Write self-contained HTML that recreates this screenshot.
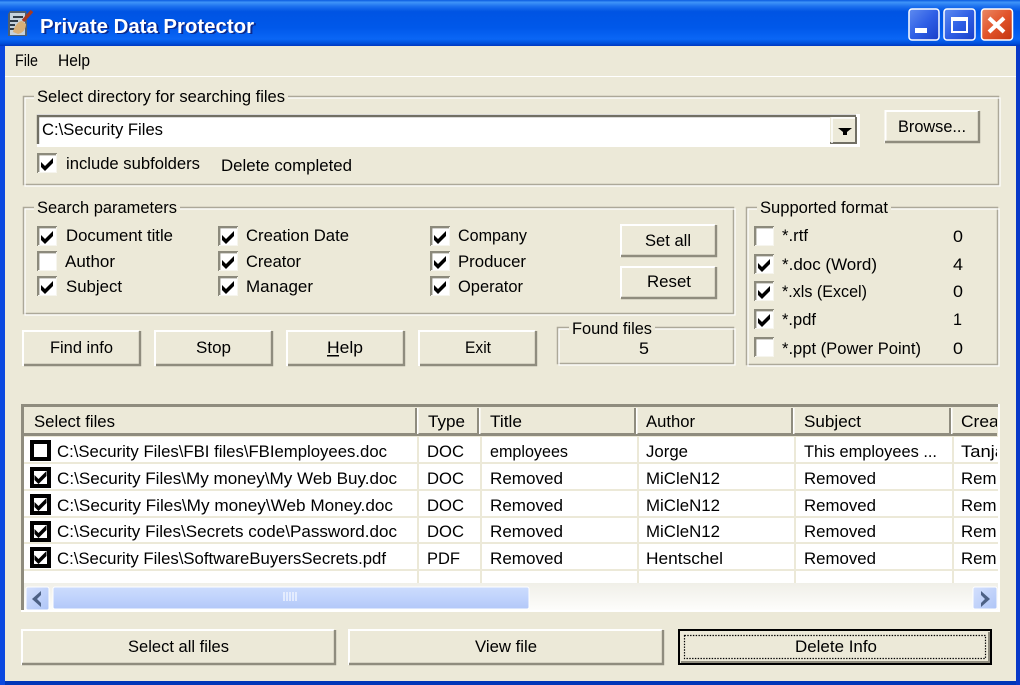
<!DOCTYPE html>
<html><head><meta charset="utf-8"><style>
html,body{margin:0;padding:0;background:#ece9d8;width:1020px;height:685px;overflow:hidden}
svg{display:block;position:absolute;left:0;top:0}
text{font-family:"Liberation Sans",sans-serif;font-size:17px;fill:#000}
</style></head><body>
<svg width="1020" height="685" viewBox="0 0 1020 685" xmlns="http://www.w3.org/2000/svg">
<defs>
<linearGradient id="tb" x1="0" y1="0" x2="0" y2="1">
<stop offset="0" stop-color="#0a5ae0"/><stop offset=".05" stop-color="#3f94f8"/><stop offset=".14" stop-color="#1c70ee"/><stop offset=".25" stop-color="#0054e3"/><stop offset=".6" stop-color="#0058ea"/><stop offset=".85" stop-color="#0a66f5"/><stop offset=".94" stop-color="#0050dc"/><stop offset="1" stop-color="#0038c0"/>
</linearGradient>
<linearGradient id="bb" x1="0" y1="0" x2="1" y2="1"><stop offset="0" stop-color="#5f8cf0"/><stop offset=".5" stop-color="#2f5fe6"/><stop offset="1" stop-color="#1a3fc8"/></linearGradient>
<linearGradient id="rb" x1="0" y1="0" x2="1" y2="1"><stop offset="0" stop-color="#ea8a66"/><stop offset=".5" stop-color="#e2532a"/><stop offset="1" stop-color="#c23410"/></linearGradient>
<linearGradient id="th" x1="0" y1="0" x2="0" y2="1"><stop offset="0" stop-color="#ccdcfd"/><stop offset=".5" stop-color="#c0d3fc"/><stop offset="1" stop-color="#b2c8f8"/></linearGradient>
<linearGradient id="tr" x1="0" y1="0" x2="0" y2="1"><stop offset="0" stop-color="#f0efe8"/><stop offset="1" stop-color="#fdfdfb"/></linearGradient>
<linearGradient id="ab" x1="0" y1="0" x2="1" y2="1"><stop offset="0" stop-color="#d4e0fd"/><stop offset="1" stop-color="#aec5f7"/></linearGradient>
<clipPath id="c5"><rect x="952" y="408" width="45" height="175"/></clipPath>
<g id="cb"><rect width="20" height="20" fill="#fff"/><path d="M1.200 20V1.200H20" fill="none" stroke="#8c8a7c" stroke-width="2.400"/><path d="M1 19.500H19.500V1" fill="none" stroke="#f6f5ee" stroke-width="1"/></g>
<path id="ck" d="M0 5l4 4 8-8v5l-8 8-4-4z" fill="#000"/>
<g id="lc"><rect x="2" y="2" width="17" height="17" fill="#fff" stroke="#000" stroke-width="4"/></g>
</defs>

<!-- window frame -->
<rect width="1020" height="685" fill="#0831d9"/>
<rect x="0" y="681" width="1020" height="4" fill="#0036b8"/>
<rect x="1016" y="46" width="4" height="639" fill="#0838c8"/>
<rect x="0" y="46" width="5" height="639" fill="#0a48e0"/>
<rect x="5" y="46" width="1011" height="635" fill="#ece9d8"/>
<rect x="0" y="0" width="1020" height="46" fill="url(#tb)"/>

<!-- title icon -->
<path d="M10 11h16l1 3v22H8V14z" fill="#4e5f70"/>
<rect x="10" y="13" width="15" height="22" fill="#c5d2dc"/>
<path d="M13 17h10M10 21h8M10 25h5M10 29h5" stroke="#2f3c48" stroke-width="2"/>
<path d="M23 21l9-10" stroke="#a83a20" stroke-width="3.400"/>
<path d="M13 32c1-5 5-11 9-11l4 3c0 5-3 9-8 10z" fill="#d8b078"/>

<!-- title -->
<text x="42" y="34" font-weight="700" style="font-size:20px;fill:#0a2a90" textLength="214" lengthAdjust="spacingAndGlyphs">Private Data Protector</text>
<text x="40" y="33" font-weight="700" style="font-size:20px;fill:#fff" textLength="214" lengthAdjust="spacingAndGlyphs">Private Data Protector</text>

<!-- window buttons -->
<rect x="909" y="9" width="30" height="31" rx="3" fill="url(#bb)" stroke="#fff" stroke-width="1.500"/>
<rect x="915" y="28" width="12" height="5" fill="#fff"/>
<rect x="944" y="9" width="31" height="31" rx="3" fill="url(#bb)" stroke="#fff" stroke-width="1.500"/>
<rect x="952" y="18" width="15" height="14" fill="none" stroke="#fff" stroke-width="2"/><rect x="952" y="17" width="15" height="4" fill="#fff"/>
<rect x="981.500" y="9" width="31" height="31" rx="3" fill="url(#rb)" stroke="#fff" stroke-width="1.500"/>
<path d="M989 18l15 14M1004 18l-15 14" stroke="#fff" stroke-width="4"/>

<!-- menu -->
<text x="15" y="66" textLength="23" lengthAdjust="spacingAndGlyphs">File</text>
<text x="58" y="66" textLength="32" lengthAdjust="spacingAndGlyphs">Help</text>
<rect x="5" y="76" width="1011" height="1" fill="#fff"/>

<!-- group 1 -->
<rect x="23.500" y="96.500" width="975" height="88" fill="none" stroke="#aca899" stroke-width="1.500"/>
<rect x="25" y="98" width="975" height="88" fill="none" stroke="#fff" stroke-width="1.200"/>
<rect x="34" y="88" width="254" height="14" fill="#ece9d8"/>
<text x="37" y="102" textLength="248" lengthAdjust="spacingAndGlyphs">Select directory for searching files</text>

<!-- combo -->
<rect x="37" y="114" width="823" height="33" fill="#fff"/>
<rect x="38" y="116" width="818" height="28" fill="#fff"/>
<path d="M38 144V116H856" fill="none" stroke="#716f64" stroke-width="2.400"/>
<rect x="830" y="117" width="26" height="26" fill="#ece9d8"/>
<path d="M830 143H856V117" fill="none" stroke="#716f64" stroke-width="2"/>
<path d="M832 143V118H855" fill="none" stroke="#fff" stroke-width="1.500"/>
<path d="M838 128h14l-5 4v3h-4v-3z" fill="#000"/>
<text x="42" y="135" textLength="121" lengthAdjust="spacingAndGlyphs">C:\Security Files</text>

<!-- browse -->
<rect x="885" y="110" width="95" height="33" fill="#ece9d8"/>
<path d="M885.500 143V111H979" fill="none" stroke="#fff" stroke-width="2"/>
<path d="M885 142H979V111" fill="none" stroke="#8f8c7e" stroke-width="2.400"/>
<text x="898" y="132" textLength="68" lengthAdjust="spacingAndGlyphs">Browse...</text>

<use href="#cb" x="37" y="153"/><use href="#ck" x="41" y="157"/>
<text x="66" y="169" textLength="134" lengthAdjust="spacingAndGlyphs">include subfolders</text>
<text x="221" y="171" textLength="131" lengthAdjust="spacingAndGlyphs">Delete completed</text>

<!-- search params -->
<rect x="23.500" y="207.500" width="710" height="106" fill="none" stroke="#aca899" stroke-width="1.500"/>
<rect x="25" y="209" width="710" height="106" fill="none" stroke="#fff" stroke-width="1.200"/>
<rect x="34" y="200" width="146" height="14" fill="#ece9d8"/>
<text x="37" y="213" textLength="140" lengthAdjust="spacingAndGlyphs">Search parameters</text>

<use href="#cb" x="37" y="226"/><use href="#ck" x="41" y="230"/>
<text x="66" y="241" textLength="107" lengthAdjust="spacingAndGlyphs">Document title</text>
<use href="#cb" x="37" y="251"/>
<text x="65" y="267" textLength="50" lengthAdjust="spacingAndGlyphs">Author</text>
<use href="#cb" x="37" y="276"/><use href="#ck" x="41" y="280"/>
<text x="66" y="292" textLength="56" lengthAdjust="spacingAndGlyphs">Subject</text>

<use href="#cb" x="218" y="226"/><use href="#ck" x="222" y="230"/>
<text x="246" y="241" textLength="103" lengthAdjust="spacingAndGlyphs">Creation Date</text>
<use href="#cb" x="218" y="251"/><use href="#ck" x="222" y="255"/>
<text x="246" y="267" textLength="55" lengthAdjust="spacingAndGlyphs">Creator</text>
<use href="#cb" x="218" y="276"/><use href="#ck" x="222" y="280"/>
<text x="246" y="292" textLength="67" lengthAdjust="spacingAndGlyphs">Manager</text>

<use href="#cb" x="430" y="226"/><use href="#ck" x="434" y="230"/>
<text x="458" y="241" textLength="69" lengthAdjust="spacingAndGlyphs">Company</text>
<use href="#cb" x="430" y="251"/><use href="#ck" x="434" y="255"/>
<text x="458" y="267" textLength="68" lengthAdjust="spacingAndGlyphs">Producer</text>
<use href="#cb" x="430" y="276"/><use href="#ck" x="434" y="280"/>
<text x="458" y="292" textLength="65" lengthAdjust="spacingAndGlyphs">Operator</text>

<!-- set all/reset -->
<path d="M621 257V225H715" fill="none" stroke="#fff" stroke-width="2"/>
<path d="M621 256H716V225" fill="none" stroke="#8f8c7e" stroke-width="2.400"/>
<text x="645" y="246" textLength="46" lengthAdjust="spacingAndGlyphs">Set all</text>
<path d="M621 298V267H715" fill="none" stroke="#fff" stroke-width="2"/>
<path d="M621 298H716V267" fill="none" stroke="#8f8c7e" stroke-width="2.400"/>
<text x="647" y="287" textLength="44" lengthAdjust="spacingAndGlyphs">Reset</text>

<!-- supported -->
<rect x="746.500" y="207.500" width="251" height="157" fill="none" stroke="#aca899" stroke-width="1.500"/>
<rect x="748" y="209" width="251" height="157" fill="none" stroke="#fff" stroke-width="1.200"/>
<rect x="757" y="200" width="134" height="14" fill="#ece9d8"/>
<text x="760" y="213" textLength="128" lengthAdjust="spacingAndGlyphs">Supported format</text>
<use href="#cb" x="754" y="226"/>
<text x="782" y="241" textLength="26" lengthAdjust="spacingAndGlyphs">*.rtf</text><text x="953" y="242" textLength="10" lengthAdjust="spacingAndGlyphs">0</text>
<use href="#cb" x="754" y="254"/><use href="#ck" x="758" y="258"/>
<text x="782" y="270" textLength="95" lengthAdjust="spacingAndGlyphs">*.doc (Word)</text><text x="953" y="270" textLength="10" lengthAdjust="spacingAndGlyphs">4</text>
<use href="#cb" x="754" y="281"/><use href="#ck" x="758" y="285"/>
<text x="782" y="297" textLength="85" lengthAdjust="spacingAndGlyphs">*.xls (Excel)</text><text x="953" y="297" textLength="10" lengthAdjust="spacingAndGlyphs">0</text>
<use href="#cb" x="754" y="309"/><use href="#ck" x="758" y="313"/>
<text x="782" y="325" textLength="34" lengthAdjust="spacingAndGlyphs">*.pdf</text><text x="953" y="325" textLength="9" lengthAdjust="spacingAndGlyphs">1</text>
<use href="#cb" x="754" y="337"/>
<text x="782" y="354" textLength="139" lengthAdjust="spacingAndGlyphs">*.ppt (Power Point)</text><text x="953" y="354" textLength="10" lengthAdjust="spacingAndGlyphs">0</text>

<!-- action buttons -->
<path d="M23 366V331H139" fill="none" stroke="#fff" stroke-width="2"/><path d="M24 365H140V331" fill="none" stroke="#8f8c7e" stroke-width="2.400"/>
<text x="50" y="353" textLength="63" lengthAdjust="spacingAndGlyphs">Find info</text>
<path d="M155 366V331H271" fill="none" stroke="#fff" stroke-width="2"/><path d="M156 365H272V331" fill="none" stroke="#8f8c7e" stroke-width="2.400"/>
<text x="196" y="353" textLength="35" lengthAdjust="spacingAndGlyphs">Stop</text>
<path d="M287 366V331H403" fill="none" stroke="#fff" stroke-width="2"/><path d="M288 365H404V331" fill="none" stroke="#8f8c7e" stroke-width="2.400"/>
<text x="327" y="353" textLength="36" lengthAdjust="spacingAndGlyphs">Help</text><rect x="327" y="355" width="12" height="1.500" fill="#000"/>
<path d="M419 366V331H535" fill="none" stroke="#fff" stroke-width="2"/><path d="M420 365H536V331" fill="none" stroke="#8f8c7e" stroke-width="2.400"/>
<text x="465" y="353" textLength="26" lengthAdjust="spacingAndGlyphs">Exit</text>

<!-- found -->
<rect x="557.500" y="327.500" width="176" height="36" fill="none" stroke="#aca899" stroke-width="1.500"/>
<rect x="559" y="329" width="176" height="36" fill="none" stroke="#fff" stroke-width="1.200"/>
<rect x="569" y="320" width="86" height="13" fill="#ece9d8"/>
<text x="572" y="334" textLength="80" lengthAdjust="spacingAndGlyphs">Found files</text>
<text x="639" y="354" textLength="10" lengthAdjust="spacingAndGlyphs">5</text>

<!-- list -->
<rect x="21" y="404" width="979" height="208" fill="#fff"/>
<rect x="21" y="404" width="977" height="3" fill="#8f8c7e"/>
<rect x="21" y="404" width="3" height="206" fill="#8f8c7e"/>
<rect x="24" y="407" width="974" height="30" fill="#ece9d8"/>
<rect x="24" y="437" width="974" height="146" fill="#fff"/>
<rect x="24" y="433" width="973" height="3" fill="#8f8c7e"/>
<g fill="#8f8c7e"><rect x="415" y="408" width="2" height="26"/><rect x="477" y="408" width="2" height="26"/><rect x="634" y="408" width="2" height="26"/><rect x="791" y="408" width="2" height="26"/><rect x="949" y="408" width="2" height="26"/></g>
<g fill="#fff"><rect x="417" y="408" width="1.500" height="26"/><rect x="479" y="408" width="1.500" height="26"/><rect x="636" y="408" width="1.500" height="26"/><rect x="793" y="408" width="1.500" height="26"/><rect x="951" y="408" width="1.500" height="26"/></g>
<text x="34" y="427" textLength="81" lengthAdjust="spacingAndGlyphs">Select files</text>
<text x="428" y="427" textLength="37" lengthAdjust="spacingAndGlyphs">Type</text>
<text x="490" y="427" textLength="32" lengthAdjust="spacingAndGlyphs">Title</text>
<text x="646" y="427" textLength="49" lengthAdjust="spacingAndGlyphs">Author</text>
<text x="804" y="427" textLength="57" lengthAdjust="spacingAndGlyphs">Subject</text>
<g fill="#ece9d8">
<rect x="24" y="462" width="974" height="2"/><rect x="24" y="489" width="974" height="2"/><rect x="24" y="516" width="974" height="2"/><rect x="24" y="542" width="974" height="2"/><rect x="24" y="569" width="974" height="2"/>
<rect x="417" y="437" width="2" height="146"/><rect x="480" y="437" width="2" height="146"/><rect x="637" y="437" width="2" height="146"/><rect x="794" y="437" width="2" height="146"/><rect x="952" y="437" width="2" height="146"/>
</g>
<use href="#lc" x="30" y="440"/>
<use href="#lc" x="30" y="467"/><use href="#ck" x="34.500" y="470"/>
<use href="#lc" x="30" y="494"/><use href="#ck" x="34.500" y="497"/>
<use href="#lc" x="30" y="521"/><use href="#ck" x="34.500" y="524"/>
<use href="#lc" x="30" y="547"/><use href="#ck" x="34.500" y="550"/>

<text x="57" y="457" textLength="330" lengthAdjust="spacingAndGlyphs">C:\Security Files\FBI files\FBIemployees.doc</text>
<text x="57" y="484" textLength="340" lengthAdjust="spacingAndGlyphs">C:\Security Files\My money\My Web Buy.doc</text>
<text x="57" y="511" textLength="336" lengthAdjust="spacingAndGlyphs">C:\Security Files\My money\Web Money.doc</text>
<text x="57" y="537" textLength="340" lengthAdjust="spacingAndGlyphs">C:\Security Files\Secrets code\Password.doc</text>
<text x="57" y="564" textLength="329" lengthAdjust="spacingAndGlyphs">C:\Security Files\SoftwareBuyersSecrets.pdf</text>

<text x="427" y="457" textLength="37" lengthAdjust="spacingAndGlyphs">DOC</text>
<text x="427" y="484" textLength="37" lengthAdjust="spacingAndGlyphs">DOC</text>
<text x="427" y="511" textLength="37" lengthAdjust="spacingAndGlyphs">DOC</text>
<text x="427" y="537" textLength="37" lengthAdjust="spacingAndGlyphs">DOC</text>
<text x="427" y="564" textLength="33" lengthAdjust="spacingAndGlyphs">PDF</text>

<text x="490" y="457" textLength="78" lengthAdjust="spacingAndGlyphs">employees</text>
<text x="490" y="484" textLength="73" lengthAdjust="spacingAndGlyphs">Removed</text>
<text x="490" y="511" textLength="73" lengthAdjust="spacingAndGlyphs">Removed</text>
<text x="490" y="537" textLength="73" lengthAdjust="spacingAndGlyphs">Removed</text>
<text x="490" y="564" textLength="73" lengthAdjust="spacingAndGlyphs">Removed</text>

<text x="646" y="457" textLength="42" lengthAdjust="spacingAndGlyphs">Jorge</text>
<text x="646" y="484" textLength="74" lengthAdjust="spacingAndGlyphs">MiCleN12</text>
<text x="646" y="511" textLength="74" lengthAdjust="spacingAndGlyphs">MiCleN12</text>
<text x="646" y="537" textLength="74" lengthAdjust="spacingAndGlyphs">MiCleN12</text>
<text x="646" y="564" textLength="77" lengthAdjust="spacingAndGlyphs">Hentschel</text>

<text x="804" y="457" textLength="133" lengthAdjust="spacingAndGlyphs">This employees ...</text>
<text x="804" y="484" textLength="72" lengthAdjust="spacingAndGlyphs">Removed</text>
<text x="804" y="511" textLength="72" lengthAdjust="spacingAndGlyphs">Removed</text>
<text x="804" y="537" textLength="72" lengthAdjust="spacingAndGlyphs">Removed</text>
<text x="804" y="564" textLength="72" lengthAdjust="spacingAndGlyphs">Removed</text>

<g clip-path="url(#c5)">
<text x="961" y="427" textLength="58" lengthAdjust="spacingAndGlyphs">Creator</text>
<text x="961" y="457" textLength="44" lengthAdjust="spacingAndGlyphs">Tanja</text>
<text x="961" y="484" textLength="72" lengthAdjust="spacingAndGlyphs">Removed</text>
<text x="961" y="511" textLength="72" lengthAdjust="spacingAndGlyphs">Removed</text>
<text x="961" y="537" textLength="72" lengthAdjust="spacingAndGlyphs">Removed</text>
<text x="961" y="564" textLength="72" lengthAdjust="spacingAndGlyphs">Removed</text>
</g>

<!-- scrollbar -->
<rect x="24" y="583" width="974" height="27" fill="url(#tr)"/>
<rect x="998" y="404" width="2" height="208" fill="#fff"/>
<rect x="21" y="610" width="979" height="2" fill="#fff"/>
<rect x="26" y="587" width="23" height="23" rx="2" fill="url(#ab)" stroke="#fff"/>
<path d="M41 591l-9 8 9 8v-4l-4-4 4-4z" fill="#4d6185"/>
<rect x="53" y="587" width="476" height="22" rx="2" fill="url(#th)" stroke="#fff"/>
<path d="M284 592v9M287 592v9M290 592v9M293 592v9M296 592v9" stroke="#eef3ff" stroke-width="1.500"/>
<rect x="973" y="587" width="24" height="22" rx="2" fill="url(#ab)" stroke="#fff"/>
<path d="M981 591l9 8-9 8v-4l4-4-4-4z" fill="#4d6185"/>

<!-- bottom buttons -->
<path d="M22 665V630H334" fill="none" stroke="#fff" stroke-width="2"/><path d="M22 664H335V630" fill="none" stroke="#8f8c7e" stroke-width="2.400"/>
<text x="128" y="652" textLength="101" lengthAdjust="spacingAndGlyphs">Select all files</text>
<path d="M349 665V630H662" fill="none" stroke="#fff" stroke-width="2"/><path d="M349 664H663V630" fill="none" stroke="#8f8c7e" stroke-width="2.400"/>
<text x="475" y="652" textLength="62" lengthAdjust="spacingAndGlyphs">View file</text>
<rect x="679" y="630" width="312" height="34" fill="#ece9d8" stroke="#000" stroke-width="2"/>
<path d="M681 662H989V632" fill="none" stroke="#8f8c7e" stroke-width="2"/>
<rect x="684.500" y="635.500" width="301" height="23" fill="none" stroke="#000" stroke-width="1.200" stroke-dasharray="1.400 1.400"/>
<text x="795" y="652" textLength="82" lengthAdjust="spacingAndGlyphs">Delete Info</text>
</svg>
</body></html>
